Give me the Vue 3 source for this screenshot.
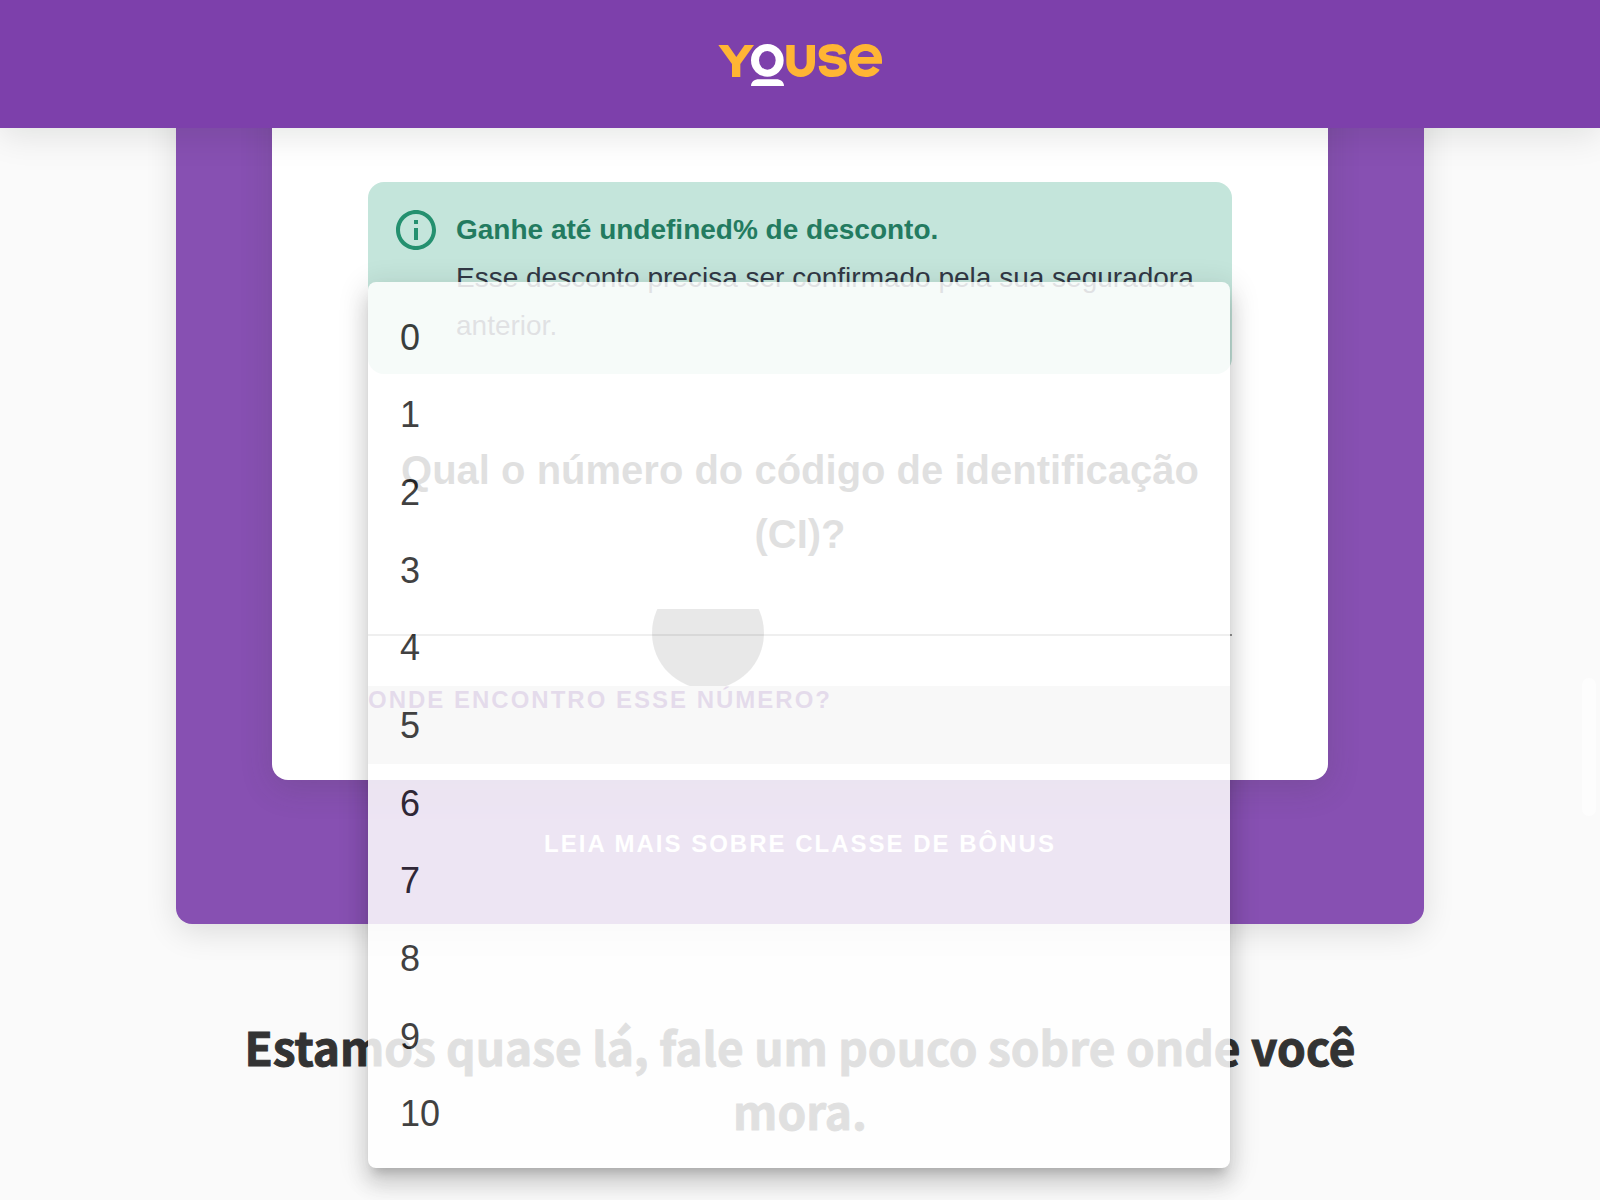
<script setup>
import { ref } from 'vue'

const options = Array.from({ length: 11 }, (_, n) => n)
const pressed = ref(4)
const hovered = ref(5)
const code = ref('')
</script>

<template>
  <div class="page">
    <header class="topbar">
      <a href="#" class="brand" aria-label="Youse">
        <svg width="164" height="42" viewBox="84 72 492 126" aria-hidden="true">
          <g fill="#ffb534">
            <path d="M85 75h29l25 36 25-36h28l-41 57v39h-25v-39z" />
            <path d="M289 75h25v52c0 13 7 21 18 21s18-8 18-21V75h25v52c0 26-17 44-43 44s-43-18-43-44z" />
            <path fill="none" stroke="#ffb534" stroke-width="22" d="M457 103C455 88 444 83 428 83C409 83 397 90 397 101C397 113 407 116 428 119C449 121 459 127 459 140C459 153 448 160 428 160C409 160 398 153 397 137" />
            <path fill-rule="evenodd" d="M576 131h-73c3 11 12 18 25 18 9 0 16-3 21-10l20 10c-8 14-23 22-42 22-30 0-50-21-50-50s21-49 50-49 49 20 49 49zM552 111c-3-11-12-18-25-18s-22 7-24 18z" />
          </g>
          <g fill="#fff">
            <path fill-rule="evenodd" d="M232 72a49 49 0 1 0 0 98 49 49 0 1 0 0-98zm0 21a25 28 0 1 1 0 56 25 28 0 1 1 0-56z" />
            <path d="M183 198h99c0-12-10-20-24-20h-51c-14 0-24 8-24 20z" />
          </g>
        </svg>
      </a>
    </header>

    <main>
      <section class="panel">
        <div class="card">
          <div class="field-area">
            <div class="notice" role="status">
              <svg class="notice-icon" width="48" height="48" viewBox="0 0 24 24" fill="#24906f" aria-hidden="true">
                <path d="M11 7h2v2h-2zm0 4h2v6h-2zm1-9C6.480 2 2 6.480 2 12s4.480 10 10 10 10-4.480 10-10S17.520 2 12 2zm0 18c-4.410 0-8-3.590-8-8s3.590-8 8-8 8 3.590 8 8-3.590 8-8 8z" />
              </svg>
              <div class="notice-text">
                <strong>Ganhe até undefined% de desconto.</strong>
                <p>Esse desconto precisa ser confirmado pela sua seguradora anterior.</p>
              </div>
            </div>

            <label class="question" for="ci">Qual o número do código de identificação (CI)?</label>
            <input id="ci" v-model="code" class="code-input" type="text" />
            <button type="button" class="link-button where">Onde encontro esse número?</button>

            <ul class="menu" role="listbox" aria-label="Opções">
              <li
                v-for="n in options"
                :key="n"
                role="option"
                class="option"
                :class="{ hovered: n === hovered }"
                @mouseenter="hovered = n"
                @click="pressed = n"
              >
                {{ n }}
                <span v-if="n === pressed" class="ripple"></span>
              </li>
            </ul>
          </div>
        </div>
        <button type="button" class="link-button more">Leia mais sobre classe de bônus</button>
      </section>

      <h2 class="next-title">Estamos quase lá, fale um pouco sobre onde você mora.</h2>
    </main>

    <div class="scroll-thumb"></div>
  </div>
</template>

<style>
body {
  margin: 0;
  background: #fafafa;
}
</style>

<style scoped>
.page {
  min-height: 100vh;
  font-family: "Liberation Sans", Arial, sans-serif;
  color: #333;
}
.topbar {
  position: sticky;
  top: 0;
  z-index: 1;
  display: flex;
  justify-content: center;
  height: 128px;
  box-sizing: border-box;
  padding-top: 44px;
  background: #7d40ab;
  box-shadow: 0 8px 32px rgba(0, 20, 10, 0.1);
}
.brand {
  height: 42px;
}
.brand svg {
  display: block;
}
.panel {
  display: flex;
  flex-direction: column;
  align-items: center;
  margin: -48px 176px 0;
  padding: 0 96px 56px;
  border-radius: 16px;
  background: #8750b2;
  box-shadow: 0 8px 32px rgba(0, 0, 0, 0.12);
}
.card {
  align-self: stretch;
  padding: 102px 96px 56px;
  border-radius: 16px;
  background: #fff;
  box-shadow: 0 8px 32px rgba(60, 60, 60, 0.18);
}
.field-area {
  position: relative;
  display: flex;
  flex-direction: column;
  align-items: flex-start;
}
.notice {
  align-self: stretch;
  display: flex;
  gap: 16px;
  padding: 24px;
  border-radius: 16px;
  background: #c4e5db;
  font-size: 28px;
  line-height: 48px;
}
.notice-icon {
  flex: none;
}
.notice-text strong {
  color: #237b60;
}
.notice-text p {
  margin: 0;
  color: #323845;
}
.question {
  align-self: stretch;
  margin-top: 64px;
  font-size: 40px;
  font-weight: 700;
  line-height: 64px;
  text-align: center;
}
.code-input {
  align-self: stretch;
  height: 64px;
  box-sizing: border-box;
  margin: 6px 0 40px;
  padding: 0;
  border: 0;
  border-bottom: 2px solid #949494;
  background: none;
  font: 32px "Liberation Sans", Arial, sans-serif;
  outline: none;
}
.link-button {
  padding: 0;
  border: 0;
  background: none;
  font: 700 24px/48px "Liberation Sans", Arial, sans-serif;
  letter-spacing: 2px;
  text-transform: uppercase;
  cursor: pointer;
}
.where {
  color: #7d40ab;
}
.more {
  margin-top: 40px;
  color: #fff;
}
.menu {
  position: absolute;
  top: 100px;
  left: 0;
  right: 2px;
  z-index: 2;
  display: flex;
  flex-direction: column;
  box-sizing: border-box;
  height: 886px;
  margin: 0;
  padding: 16px 0;
  border-radius: 8px;
  background: #fff;
  color: #212121;
  list-style: none;
  opacity: 0.85;
  box-shadow:
    0 10px 10px -6px rgba(0, 0, 0, 0.2),
    0 16px 20px 2px rgba(0, 0, 0, 0.14),
    0 6px 28px 4px rgba(0, 0, 0, 0.12);
}
.option {
  position: relative;
  flex: 1;
  display: flex;
  align-items: center;
  overflow: hidden;
  box-sizing: border-box;
  padding: 2px 32px 0;
  font-size: 36px;
  cursor: pointer;
}
.option.hovered {
  background: rgba(0, 0, 0, 0.03);
}
.ripple {
  position: absolute;
  top: -32px;
  left: 284px;
  width: 112px;
  height: 112px;
  border-radius: 50%;
  background: rgba(0, 0, 0, 0.1);
}
.next-title {
  margin: 90px 240px 0;
  font-family: "Noto Sans CJK SC", "Noto Sans", sans-serif;
  font-size: 46px;
  font-weight: 700;
  line-height: 64px;
  text-align: center;
  -webkit-text-stroke: 1px currentColor;
}
.scroll-thumb {
  position: fixed;
  top: 678px;
  right: 4px;
  width: 14px;
  height: 138px;
  border-radius: 7px;
  background: #fdfdfd;
}
</style>
